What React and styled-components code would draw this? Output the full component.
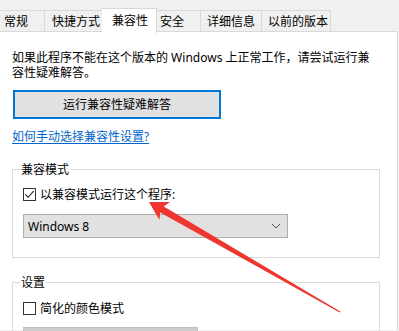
import React from 'react';
import styled, { createGlobalStyle } from 'styled-components';

const GlobalStyle = createGlobalStyle`
    html, body {
        margin: 0;
        padding: 0;
        background: #f0f0f0;
        width: 399px;
        height: 331px;
        overflow: hidden;
    }
    body {
        font-family: "Noto Sans", "Noto Sans CJK SC", sans-serif;
        font-size: 12px;
        color: #000;
    }
`

const tabs = [
    { label: '常规', width: 45, pad: 4 },
    { label: '快捷方式', width: 59, pad: 7 },
    { label: '兼容性', width: 51, pad: 8, selected: true },
    { label: '安全', width: 46, pad: 5 },
    { label: '详细信息', width: 61, pad: 6 },
    { label: '以前的版本', width: 69, pad: 6 },
];

const App = () => {
    return (
        <Page>
            <GlobalStyle />
            <TabStrip>
                {tabs.map((t) => (
                    <Tab key={t.label} $w={t.width} $pad={t.pad} $selected={t.selected}>
                        {t.label}
                    </Tab>
                ))}
            </TabStrip>
            <Panel>
                <Intro>
                    如果此程序不能在这个版本的 Windows 上正常工作，请尝试运行兼<br />
                    容性疑难解答。
                </Intro>
                <TroubleButton>运行兼容性疑难解答</TroubleButton>
                <HelpLink>如何手动选择兼容性设置?</HelpLink>

                <Group>
                    <Legend>兼容模式</Legend>
                    <GroupBody>
                        <CheckRow>
                            <CheckBox>
                                <svg width="11" height="11" viewBox="0 0 11 11">
                                    <path d="M1.5 5.5 L4.2 8.3 L9.6 2.2" fill="none" stroke="#222" strokeWidth="1.1" />
                                </svg>
                            </CheckBox>
                            <span>以兼容模式运行这个程序:</span>
                        </CheckRow>
                        <Select>
                            <span>Windows 8</span>
                            <svg width="10" height="6" viewBox="0 0 10 6">
                                <path d="M1 1 L5 5 L9 1" fill="none" stroke="#555" strokeWidth="1" />
                            </svg>
                        </Select>
                    </GroupBody>
                </Group>

                <Group $gap={17}>
                    <Legend>设置</Legend>
                    <GroupBody>
                        <CheckRow $top={11}>
                            <CheckBox />
                            <span>简化的颜色模式</span>
                        </CheckRow>
                        <DisabledSelect />
                    </GroupBody>
                </Group>
            </Panel>

            <Arrow width="399" height="331" viewBox="0 0 399 331">
                <polygon
                    points="149,202 170,202 163.8,206.5 340.3,311.5 339.7,312.5 160.2,212.5 159.4,220"
                    fill="#ee3530"
                />
            </Arrow>
        </Page>
    );
}

const Page = styled.div`
    position: relative;
    width: 399px;
    height: 331px;
    overflow: hidden;
`

const TabStrip = styled.div`
    display: flex;
    align-items: flex-end;
    height: 32px;
    padding-left: 0;
`

const Tab = styled.div`
    box-sizing: border-box;
    width: ${p => p.$selected ? p.$w + 4 : p.$w}px;
    margin: 0 ${p => p.$selected ? -2 : 0}px;
    height: ${p => p.$selected ? 25 : 22}px;
    margin-bottom: ${p => p.$selected ? -1 : 0}px;
    padding-left: ${p => p.$selected ? p.$pad + 2 : p.$pad}px;
    padding-top: ${p => p.$selected ? 4 : 3}px;
    line-height: 15px;
    white-space: nowrap;
    background: ${p => p.$selected ? '#ffffff' : '#f0f0f0'};
    border: 1px solid #d9d9d9;
    border-bottom: ${p => p.$selected ? 'none' : '1px solid #d9d9d9'};
    border-left: ${p => p.$selected ? '1px solid #d9d9d9' : 'none'};
    position: relative;
    z-index: ${p => p.$selected ? 2 : 1};
    &:first-child {
        border-left: none;
    }
    & + & {
        border-left: ${p => p.$selected ? '1px solid #d9d9d9' : 'none'};
    }
`

const Panel = styled.div`
    box-sizing: border-box;
    width: 398px;
    height: 299px;
    background: #ffffff;
    border-top: 1px solid #d9d9d9;
    border-right: 1px solid #d9d9d9;
    padding: 18px 0 0 12px;
    margin-top: -1px;
`

const Intro = styled.div`
    line-height: 15px;
    white-space: nowrap;
`

const TroubleButton = styled.div`
    box-sizing: border-box;
    width: 208px;
    height: 29px;
    margin: 10px 0 0 1px;
    background: #e1e1e1;
    border: 2px solid #0078d7;
    display: flex;
    align-items: center;
    justify-content: center;
    line-height: 15px;
`

const HelpLink = styled.div`
    margin-top: 10px;
    line-height: 15px;
    color: #0066cc;
    text-decoration: underline;
    text-underline-offset: 2px;
`

const Group = styled.fieldset`
    box-sizing: border-box;
    width: 368px;
    margin: ${p => p.$gap || 18}px 0 0 0;
    padding: 0 0 19px 7px;
    border: 1px solid #dcdcdc;
    min-inline-size: 0;
`

const Legend = styled.legend`
    padding: 0 1px;
    line-height: 15px;
`

const GroupBody = styled.div`
    padding-left: 3px;
`

const CheckRow = styled.div`
    display: flex;
    align-items: center;
    gap: 4px;
    height: 15px;
    line-height: 15px;
    margin-top: ${p => p.$top || 10}px;
`

const CheckBox = styled.div`
    box-sizing: border-box;
    width: 13px;
    height: 13px;
    border: 1px solid #333333;
    background: #ffffff;
    display: flex;
    align-items: center;
    justify-content: center;
    flex-shrink: 0;
`

const Select = styled.div`
    box-sizing: border-box;
    width: 265px;
    height: 24px;
    margin-top: 12px;
    background: #e1e1e1;
    border: 1px solid #adadad;
    display: flex;
    align-items: center;
    justify-content: space-between;
    padding: 0 6px 0 4px;
    line-height: 15px;
`

const DisabledSelect = styled.div`
    box-sizing: border-box;
    width: 175px;
    height: 24px;
    margin-top: 11px;
    background: #cccccc;
    border: 1px solid #bfbfbf;
`

const Arrow = styled.svg`
    position: absolute;
    left: 0;
    top: 0;
    pointer-events: none;
`

export default App
